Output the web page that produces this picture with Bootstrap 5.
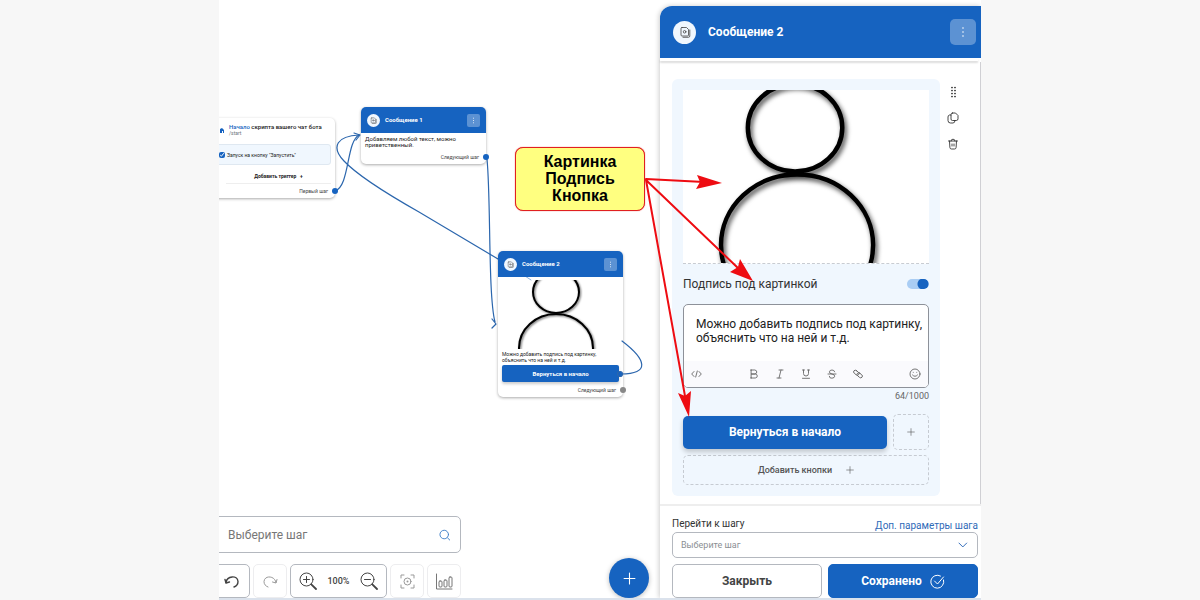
<!DOCTYPE html>
<html lang="ru">
<head>
<meta charset="utf-8">
<meta name="viewport" content="width=device-width, initial-scale=1">
<title>Конструктор чат-бота</title>
<link href="https://cdn.jsdelivr.net/npm/bootstrap@5.3.0/dist/css/bootstrap.min.css" rel="stylesheet">
<style>
  :root { --blue: #1663c0; --line: #b4b8bf; --pale: #f0f7fe; }
  body { background: #f7f7f7; font-family: Roboto, "Liberation Sans", sans-serif; font-size: 12px; line-height: 14px; color: #333; }
  svg { display: block; fill: none; stroke: currentColor; stroke-linecap: round; stroke-linejoin: round; }
  .stage { max-width: 762px; background: #fff; border-bottom: 2px solid #dbe2ec; }
  .canvas { min-width: 0; }
  .layer { inset: 0; pointer-events: none; }
  .bg-blue { background: var(--blue); color: #fff; }
  .round-icon { border-radius: 50%; background: var(--pale); color: #444; stroke-width: .8; }
  .dots { border: 0; background: #5c92d3; color: #fff; padding: 0; }

  /* step cards on the canvas */
  .step { width: 125px; border-radius: 5px; background: #fff; box-shadow: 0 1px 3px #0005; font-size: 6px; line-height: 6px; color: #222; }
  .step-start { left: -9px; top: 118px; }
  .step-one { left: 142px; top: 107px; }
  .step-two { left: 279px; top: 251px; }
  .step-head { height: 26px; border-radius: 5px 5px 0 0; padding: 0 6px; gap: 5px; }
  .step-head .round-icon { width: 13px; height: 13px; }
  .step-head .dots { width: 13px; height: 13px; border-radius: 2px; }
  .step-title { padding: 6px 0 0 8px; }
  .step-next { font-size: 5px; color: #444; padding-bottom: 4px; }
  .step-note { font-size: 5px; }
  .port { width: 6px; height: 6px; border-radius: 50%; background: var(--blue); margin-right: -3px; }
  .port-idle { background: #888; }
  .trigger { height: 21px; background: var(--pale); border: 1px solid #dfe8f1; border-radius: 3px; font-size: 5px; padding-left: 8px; gap: 2px; margin-top: 8px; }
  .trigger input { width: 6px; height: 6px; margin: 0; accent-color: var(--blue); }
  .trigger-add { padding: 8px 0 4px; border-bottom: 1px solid #eee; }
  .plain { border: 0; background: none; padding: 0; color: inherit; }
  .step-text { padding: 3px 4px 6px; }
  .step-caption { padding: 2px 0; }
  .step-btn { height: 17px; border: 0; border-radius: 2px; font-size: 6px; line-height: 6px; box-shadow: 0 2px 3px #0003; }
  .step-btn + .step-next, .step-two .step-next { padding-top: 5px; }

  .callout { left: 296px; top: 147px; width: 130px; padding: 5px 0 6px; background: #ffff80; border: 1px solid #e02020; border-radius: 8px; font: bold 16px/17px "Liberation Sans", sans-serif; color: #000; box-shadow: 0 0 1px #e02020; }

  /* bottom dock */
  .dock { padding: 0 11px 0 0; }
  .dock-tools { width: 247px; margin-left: -5px; }
  .search { height: 37px; border: 1px solid var(--line); border-radius: 5px; padding: 0 10px 0 13px; background: #fff; margin-bottom: 11px; }
  .search input { border: 0; outline: 0; width: 100%; background: none; font-size: 12px; padding: 0; }
  .search input::placeholder { color: #777; opacity: 1; }
  .tool { height: 34px; border: 1px solid #ededef; border-radius: 5px; background: #fff; color: #999; width: 34px; padding: 0; }
  .tool-strong { border-color: var(--line); color: #444; }
  .tool-first { width: 36px; }
  .zoom-group { width: 97px; padding: 0 8px; font-size: 9px; font-weight: 500; }
  .fab { width: 40px; height: 40px; border-radius: 50%; border: 0; box-shadow: 0 1px 5px #0004; }

  /* settings panel */
  .panel { width: 321px; flex: none; padding-top: 6px; }
  .panel-card { border-radius: 12px 0 0 0; background: #fff; box-shadow: -1px 0 5px #0003; }
  .panel-head { height: 52px; border-radius: 12px 0 0 0; padding: 0 5px 0 13px; gap: 12px; }
  .panel-head .round-icon { width: 23px; height: 23px; }
  .panel-head .dots { width: 26px; height: 26px; border-radius: 5px; }
  .panel-head h1 { font-size: 12px; font-weight: 700; line-height: 14px; }
  .panel-line { height: 3px; box-shadow: 0 2px 2px #0002; margin: 0 3px 1px 0; }
  .panel-body { padding: 17px 0 8px 12px; gap: 8px; border-right: 1px solid #d0d0d4; }
  .block { width: 268px; padding: 11px; border-radius: 6px; background: var(--pale); }
  .photo { background: #fff; border-bottom: 1px dashed #c8ccd2; }
  .side { padding-top: 7px; gap: 14px; width: 10px; stroke-width: .9; }
  .caption-row { height: 40px; font-size: 12px; }
  .switch.form-check-input { width: 22px; height: 10px; margin: 0; border: 0; background-color: #a9cdf4; background-image: radial-gradient(circle at 16px 5px, var(--blue) 5px, transparent 6px); background-size: 100% 100%; box-shadow: none; }
  .editor { border: 1px solid #8d9199; border-radius: 5px; background: #fff; overflow: hidden; }
  .editor textarea { border: 0; outline: 0; resize: none; width: 100%; height: 56px; padding: 12px 0 0 12px; font-size: 12px; line-height: 14px; color: #222; display: block; background: none; overflow: hidden; }
  .editor-bar { height: 26px; background: #fafafd; padding: 0 7px; color: #666; stroke-width: .9; }
  .editor-marks { gap: 16px; margin-left: 47px; }
  .counter { font-size: 9px; line-height: 16px; color: #666; }
  .btn-main { height: 33px; border: 0; border-radius: 5px; font-size: 12px; font-weight: 700; box-shadow: 0 3px 5px #0003; }
  .button-row { gap: 6px; padding-top: 10px; }
  .dashed { border: 1px dashed #c6cbd2; border-radius: 5px; background: none; color: #555; padding: 0; stroke-width: .9; }
  .dashed-sq { width: 36px; height: 36px; }
  .dashed-wide { height: 30px; font-size: 9px; font-weight: 500; gap: 14px; margin-top: 5px; }
  .panel-foot { padding: 12px 3px 0 12px; border-top: 2px solid #eee; }
  .foot-title { font-size: 10px; line-height: 12px; }
  .foot-link { font-size: 10px; line-height: 12px; margin-top: 2px; color: #2f6ab8; text-decoration: none; }
  .step-select { height: 26px; border: 1px solid var(--line); border-radius: 5px; background: #fff; padding-right: 9px; color: #2f6ab8; }
  .step-select select { appearance: none; border: 0; outline: 0; background: none; width: 100%; padding-left: 8px; font-size: 9px; color: #8c8f94; }
  .foot-buttons { column-gap: 6px; padding-top: 6px; }
  .foot-btn { height: 34px; border: 1px solid var(--line); border-radius: 5px; font-size: 12px; font-weight: 700; background: #fff; color: #444; gap: 8px; }
  .foot-btn.bg-blue { background: var(--blue); color: #fff; border-color: var(--blue); }
</style>
</head>
<body>
<svg width="0" height="0" class="position-absolute" aria-hidden="true">
  <defs>
    <symbol id="doc" viewBox="0 0 12 12"><path d="M3 1.500h4.500l2 2V9q0 1-1 1H3Q2 10 2 9V2.500q0-1 1-1z"/><path d="M10.800 4v6q0 1.300-1.300 1.300H4"/><circle cx="5.600" cy="5.800" r="1.300"/></symbol>
    <symbol id="kebab" viewBox="0 0 12 12"><path d="M6 2v.01M6 6v.01M6 10v.01" stroke-width="1.600"/></symbol>
    <symbol id="plus" viewBox="0 0 12 12"><path d="M6 1v10M1 6h10"/></symbol>
    <filter id="soft"><feDropShadow dx="2" dy="3" stdDeviation="2.500" flood-opacity=".75"/></filter>
    <filter id="softSmall"><feDropShadow dx="1" dy="1" stdDeviation="1" flood-opacity=".6"/></filter>
  </defs>
</svg>

<div class="stage mx-auto min-vh-100 d-flex position-relative overflow-hidden">
  <main class="canvas flex-grow-1 position-relative overflow-hidden d-flex flex-column justify-content-end">
    <svg class="layer position-absolute w-100 h-100" style="color:#2b66ad" stroke-width="1.200" aria-hidden="true">
      <path d="M116 191C131 186 127 142 140 135"/>
      <path d="M140 135C119 136 111 146 125 161C139 176 170 195 200 212L279 259"/>
      <path d="M135 133l6 2-4 5"/>
      <path d="M268 159C272 200 269 295 276 322M273 319l4 5-4 4"/>
    </svg>

    <section class="step step-start position-absolute">
      <div class="step-title d-flex align-items-center gap-1">
        <svg width="7" height="8" viewBox="0 0 7 8" style="color:#1663c0"><path fill="currentColor" stroke="none" d="M2 7V3l2-1 2 2v3H5V5H4v2z"/></svg>
        <div><b class="fw-medium"><span style="color:#1663c0">Начало</span> скрипта вашего чат бота</b><div class="step-note text-secondary">/start</div></div>
      </div>
      <label class="trigger d-flex align-items-center me-1"><input type="checkbox" checked>Запуск на кнопку "Запустить"</label>
      <div class="trigger-add text-center ms-3 me-1"><button class="plain d-block mx-auto fw-bold step-note" type="button">Добавить триггер &nbsp; +</button></div>
      <div class="step-next d-flex justify-content-end align-items-center gap-1 pt-1">Первый шаг<span class="port"></span></div>
    </section>

    <section class="step step-one position-absolute">
      <header class="step-head bg-blue d-flex align-items-center">
        <span class="round-icon d-flex align-items-center justify-content-center"><svg width="7" height="7"><use href="#doc"/></svg></span>
        <b class="flex-grow-1">Сообщение 1</b>
        <button class="dots d-flex align-items-center justify-content-center" type="button" aria-label="Меню"><svg width="7" height="7"><use href="#kebab"/></svg></button>
      </header>
      <div class="step-text">Добавляем любой текст, можно приветственный.</div>
      <div class="step-next d-flex justify-content-end align-items-center gap-1">Следующий шаг<span class="port"></span></div>
    </section>

    <section class="step step-two position-absolute">
      <header class="step-head bg-blue d-flex align-items-center">
        <span class="round-icon d-flex align-items-center justify-content-center"><svg width="7" height="7"><use href="#doc"/></svg></span>
        <b class="flex-grow-1">Сообщение 2</b>
        <button class="dots d-flex align-items-center justify-content-center" type="button" aria-label="Меню"><svg width="7" height="7"><use href="#kebab"/></svg></button>
      </header>
      <svg class="w-100" height="72" viewBox="0 0 125 72" aria-hidden="true">
        <path d="M27 -1l6 4" stroke="#8fb2dc"/>
        <svg x="3" y="3" width="120" height="69"><g filter="url(#softSmall)" stroke="#000" stroke-width="2"><ellipse cx="55" cy="12" rx="23" ry="21"/><ellipse cx="55" cy="68" rx="37" ry="34"/></g></svg>
      </svg>
      <div class="px-1">
        <div class="step-note step-caption text-nowrap">Можно добавить подпись под картинку,<br>объяснить что на ней и т.д.</div>
        <button class="step-btn bg-blue fw-bold w-100" type="button">Вернуться в начало</button>
      </div>
      <div class="step-next d-flex justify-content-end align-items-center gap-1">Следующий шаг<span class="port port-idle"></span></div>
    </section>

    <svg class="layer position-absolute w-100 h-100" style="color:#2b66ad" stroke-width="1.200" aria-hidden="true">
      <path d="M402 374C431 374 428 360 403 341"/><circle cx="401" cy="374" r="2.500" fill="#1663c0"/>
    </svg>
    <div class="callout position-absolute text-center">Картинка<br>Подпись<br>Кнопка</div>

    <div class="dock d-flex align-items-end justify-content-between position-relative">
      <div class="dock-tools">
        <div class="search d-flex align-items-center">
          <input type="text" placeholder="Выберите шаг" aria-label="Выберите шаг">
          <svg width="12" height="12" viewBox="0 0 12 12" style="color:#3f7fc8"><circle cx="5.500" cy="5.500" r="4.500"/><path d="M9 9l2.300 2.300"/></svg>
        </div>
        <div class="d-flex justify-content-between">
          <button class="tool tool-strong tool-first d-flex align-items-center justify-content-center" type="button" aria-label="Отменить"><svg width="16" height="15" viewBox="0 0 16 15" stroke-width="1.400"><path d="M2 8.500C3 1.500 13.500 1 14 7.500q0 4-4 5.500"/><path d="M1 5.500l1 3.500 3.500-1"/></svg></button>
          <button class="tool d-flex align-items-center justify-content-center" type="button" aria-label="Повторить"><svg width="16" height="15" viewBox="0 0 16 15"><path d="M14 8.500C13 1.500 2.500 1 2 7.500q0 4 4 5.500"/><path d="M15 5.500l-1 3.500-3.500-1"/></svg></button>
          <div class="tool tool-strong zoom-group d-flex align-items-center justify-content-between">
            <button class="plain" type="button" aria-label="Увеличить"><svg width="18" height="18" viewBox="0 0 18 18"><circle cx="7.500" cy="7.500" r="6.500"/><path d="M7.500 4.500v6M4.500 7.500h6"/><path d="M12.300 12.300l4.700 4.700" stroke-width="1.800"/></svg></button>
            <span>100%</span>
            <button class="plain" type="button" aria-label="Уменьшить"><svg width="18" height="18" viewBox="0 0 18 18"><circle cx="7.500" cy="7.500" r="6.500"/><path d="M4.500 7.500h6"/><path d="M12.300 12.300l4.700 4.700" stroke-width="1.800"/></svg></button>
          </div>
          <button class="tool d-flex align-items-center justify-content-center" type="button" aria-label="По размеру"><svg width="15" height="15" viewBox="0 0 15 15"><path d="M1 4V1h3M11 1h3v3M14 11v3h-3M4 14H1v-3"/><circle cx="7.500" cy="7.500" r="3.500"/><path d="M7.500 7.500v.01" stroke-width="2"/></svg></button>
          <button class="tool d-flex align-items-center justify-content-center" type="button" aria-label="Статистика"><svg width="18" height="17" viewBox="0 0 18 17" style="color:#777"><path d="M1.500 1v15H17"/><rect x="4" y="8" width="3" height="6" rx="1"/><rect x="9" y="7" width="3" height="7" rx="1"/><rect x="14" y="4" width="3" height="10" rx="1"/></svg></button>
        </div>
      </div>
      <button class="fab bg-blue d-flex align-items-center justify-content-center" type="button" aria-label="Добавить шаг"><svg width="13" height="13"><use href="#plus"/></svg></button>
    </div>
  </main>

  <aside class="panel d-flex flex-column position-relative">
    <div class="panel-card flex-grow-1 d-flex flex-column">
      <header class="panel-head bg-blue d-flex align-items-center">
        <span class="round-icon d-flex align-items-center justify-content-center"><svg width="12" height="12"><use href="#doc"/></svg></span>
        <h1 class="m-0 flex-grow-1">Сообщение 2</h1>
        <button class="dots d-flex align-items-center justify-content-center" type="button" aria-label="Меню"><svg width="12" height="12"><use href="#kebab"/></svg></button>
      </header>
      <div class="panel-line"></div>
      <div class="panel-body d-flex flex-grow-1">
        <div class="block">
          <svg class="photo w-100" height="174" viewBox="0 0 246 174" role="img" aria-label="Картинка"><g filter="url(#soft)" stroke="#000" stroke-width="4.500"><ellipse cx="112" cy="38" rx="47.500" ry="44"/><ellipse cx="114" cy="156" rx="76.500" ry="71"/></g></svg>
          <div class="caption-row d-flex align-items-center justify-content-between">
            <label for="caption">Подпись под картинкой</label>
            <div class="form-switch p-0 m-0 d-flex"><input class="form-check-input switch" type="checkbox" role="switch" id="caption" checked></div>
          </div>
          <div class="editor">
            <textarea aria-label="Подпись">Можно добавить подпись под картинку, объяснить что на ней и т.д.</textarea>
            <div class="editor-bar d-flex align-items-center">
              <button class="plain" type="button" aria-label="Код"><svg width="11" height="10" viewBox="0 0 11 10"><path d="M3 2.500L.7 5 3 7.500M8 2.500L10.300 5 8 7.500M6.300 2L4.700 8"/></svg></button>
              <div class="editor-marks d-flex">
                <button class="plain" type="button" aria-label="Полужирный"><svg width="10" height="10" viewBox="0 0 10 10"><path d="M2.500 1h3.300q2 .3 2 2t-2 2H2.500zM2.500 5h3.800q2 .3 2 2t-2 2H2.500zM1.500 1h1M1.500 9h1"/></svg></button>
                <button class="plain" type="button" aria-label="Курсив"><svg width="10" height="10" viewBox="0 0 10 10"><path d="M4 1h4M2 9h4M6 1L4 9"/></svg></button>
                <button class="plain" type="button" aria-label="Подчёркнутый"><svg width="10" height="10" viewBox="0 0 10 10"><path d="M2.500 1v3.500q0 2.500 2.500 2.500t2.500-2.500V1M1.500 1h2M6.500 1h2M1.500 9.300h7"/></svg></button>
                <button class="plain" type="button" aria-label="Зачёркнутый"><svg width="10" height="10" viewBox="0 0 10 10"><path d="M7.700 2.800Q7.300 1 5 1T2.400 2.900Q2.400 4.500 5 5q2.700.5 2.700 2.200T5 9.200 2.300 7.300M1 5h8"/></svg></button>
                <button class="plain" type="button" aria-label="Ссылка"><svg width="10" height="10" viewBox="0 0 10 10"><rect x=".3" y="2" width="6" height="3.400" rx="1.700" transform="rotate(40 3.300 3.700)"/><rect x="3.700" y="4.600" width="6" height="3.400" rx="1.700" transform="rotate(40 6.700 6.300)"/></svg></button>
              </div>
              <button class="plain ms-auto" type="button" aria-label="Эмодзи"><svg width="12" height="12" viewBox="0 0 12 12"><circle cx="6" cy="6" r="5"/><path d="M3.500 7q2.500 2.800 5 0M4.300 4.300v.01M7.700 4.300v.01"/></svg></button>
            </div>
          </div>
          <div class="counter text-end">64/1000</div>
          <div class="button-row d-flex align-items-center">
            <button class="btn-main bg-blue flex-grow-1" type="button">Вернуться в начало</button>
            <button class="dashed dashed-sq d-flex align-items-center justify-content-center" type="button" aria-label="Добавить"><svg width="8" height="8"><use href="#plus"/></svg></button>
          </div>
          <button class="dashed dashed-wide w-100 d-flex align-items-center justify-content-center" type="button">Добавить кнопки<svg width="8" height="8"><use href="#plus"/></svg></button>
        </div>
        <div class="side d-flex flex-column align-items-center">
          <button class="plain" type="button" aria-label="Переместить"><svg width="12" height="12" viewBox="0 0 12 12" style="color:#222"><path stroke-width="1.700" d="M5 1.500v.01M5 4.500v.01M5 7.500v.01M5 10.500v.01M8 1.500v.01M8 4.500v.01M8 7.500v.01M8 10.500v.01"/></svg></button>
          <button class="plain" type="button" aria-label="Копировать"><svg width="12" height="12" viewBox="0 0 12 12"><path d="M5.500 1h3L11 3.500v3.300Q11 8.500 9.300 8.500H5.500Q4 8.500 4 7V2.500Q4 1 5.500 1zM4 3H2.500Q1 3.300 1 5v3.500Q1 11 3.500 11H6q2 0 2-2.500"/></svg></button>
          <button class="plain" type="button" aria-label="Удалить"><svg width="12" height="12" viewBox="0 0 12 12"><path d="M1.500 3h9M4 3q0-1.800 2-1.800T8 3M2.500 3l.4 6.500Q3 11 4.500 11h3Q9 11 9.100 9.500L9.500 3M5 6v2M7 6v2"/></svg></button>
        </div>
      </div>
      <footer class="panel-foot">
        <div class="d-flex justify-content-between">
          <label class="foot-title" for="goto">Перейти к шагу</label>
          <a class="foot-link" href="#">Доп. параметры шага</a>
        </div>
        <div class="step-select d-flex align-items-center">
          <select id="goto"><option>Выберите шаг</option></select>
          <svg width="10" height="6" viewBox="0 0 10 6"><path d="M1 1l4 4 4-4"/></svg>
        </div>
        <div class="foot-buttons row g-0">
          <div class="col"><button class="foot-btn w-100" type="button">Закрыть</button></div>
          <div class="col"><button class="foot-btn bg-blue w-100 d-flex align-items-center justify-content-center" type="button">Сохранено<svg width="15" height="15" viewBox="0 0 15 15"><path d="M13.600 6A6.500 6.500 0 1 1 10.500 2M4.500 7l3 3 6-7"/></svg></button></div>
        </div>
      </footer>
    </div>
  </aside>

  <!-- callout arrows -->
  <svg class="layer position-absolute w-100 h-100" style="color:#ee0c12" stroke-width="2" aria-hidden="true">
    <path d="M427 179L485 182M427 180L520 269M427 180L466 396"/>
    <g fill="currentColor" stroke="none">
      <path d="M503 183L477 189L481 182L478 175z"/>
      <path d="M534 281L511 272L519 267L521 259z"/>
      <path d="M470 417L459 393L466 396L472 391z"/>
    </g>
  </svg>
</div>
<script src="https://cdn.jsdelivr.net/npm/bootstrap@5.3.0/dist/js/bootstrap.bundle.min.js"></script>
</body>
</html>
